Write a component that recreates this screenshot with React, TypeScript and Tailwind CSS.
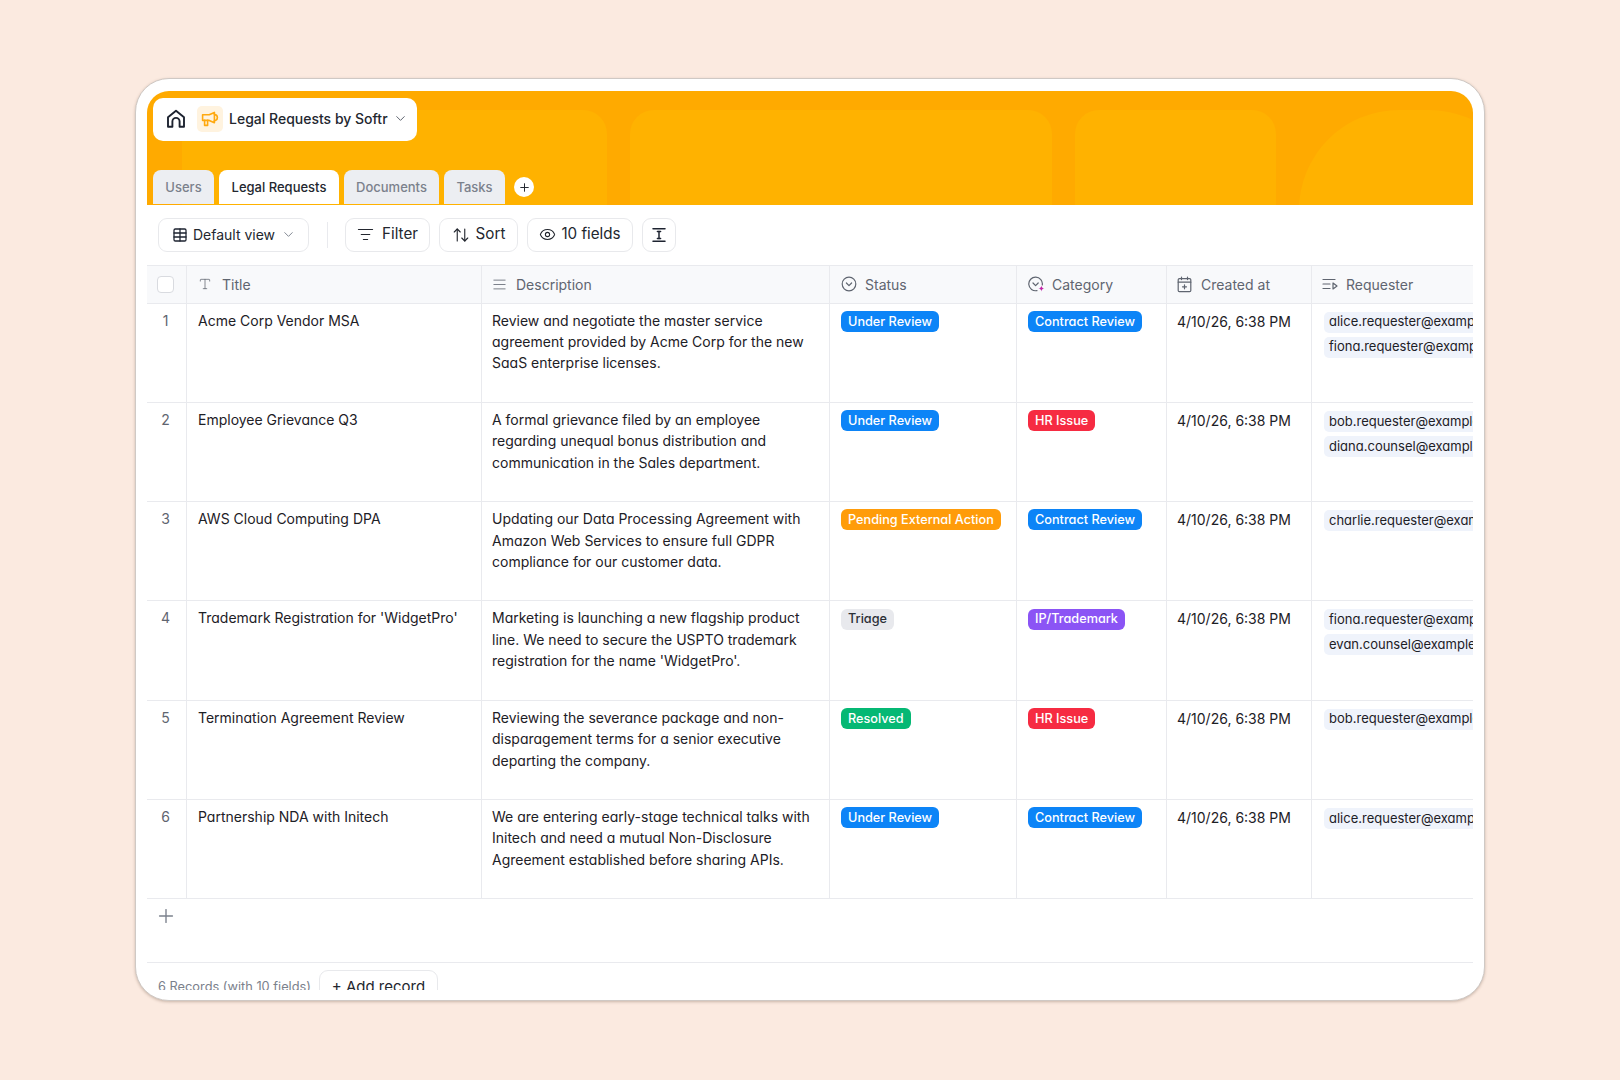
import { ChevronDown, Plus, ListFilter, ArrowUpDown, Eye, Table, AlignJustify, Type } from 'lucide-react';

type Tag = { label: string; cls: string };

const UNDER = { label: 'Under Review', cls: 'bg-[#0c84f7] text-white' };
const PENDING = { label: 'Pending External Action', cls: 'bg-[#ff9c0a] text-white' };
const TRIAGE = { label: 'Triage', cls: 'bg-[#e8e9ed] text-[#2b2f36]' };
const RESOLVED = { label: 'Resolved', cls: 'bg-[#05b874] text-white' };
const CONTRACT = { label: 'Contract Review', cls: 'bg-[#0c84f7] text-white' };
const HR = { label: 'HR Issue', cls: 'bg-[#f62b42] text-white' };
const IP = { label: 'IP/Trademark', cls: 'bg-[#8b54f5] text-white' };

const rows: { title: string; desc: string[]; status: Tag; category: Tag; people: string[] }[] = [
  {
    title: 'Acme Corp Vendor MSA',
    desc: ['Review and negotiate the master service', 'agreement provided by Acme Corp for the new', 'SaaS enterprise licenses.'],
    status: UNDER, category: CONTRACT,
    people: ['alice.requester@example.com', 'fiona.requester@example.com'],
  },
  {
    title: 'Employee Grievance Q3',
    desc: ['A formal grievance filed by an employee', 'regarding unequal bonus distribution and', 'communication in the Sales department.'],
    status: UNDER, category: HR,
    people: ['bob.requester@example.com', 'diana.counsel@example.com'],
  },
  {
    title: 'AWS Cloud Computing DPA',
    desc: ['Updating our Data Processing Agreement with', 'Amazon Web Services to ensure full GDPR', 'compliance for our customer data.'],
    status: PENDING, category: CONTRACT,
    people: ['charlie.requester@example.com'],
  },
  {
    title: "Trademark Registration for 'WidgetPro'",
    desc: ['Marketing is launching a new flagship product', 'line. We need to secure the USPTO trademark', "registration for the name 'WidgetPro'."],
    status: TRIAGE, category: IP,
    people: ['fiona.requester@example.com', 'evan.counsel@example.com'],
  },
  {
    title: 'Termination Agreement Review',
    desc: ['Reviewing the severance package and non-', 'disparagement terms for a senior executive', 'departing the company.'],
    status: RESOLVED, category: HR,
    people: ['bob.requester@example.com'],
  },
  {
    title: 'Partnership NDA with Initech',
    desc: ['We are entering early-stage technical talks with', 'Initech and need a mutual Non-Disclosure', 'Agreement established before sharing APIs.'],
    status: UNDER, category: CONTRACT,
    people: ['alice.requester@example.com'],
  },
];

const COLS = 'grid grid-cols-[40px_295px_348px_187px_150px_145px_161px]';
const CELL = 'border-r border-[#e9eaee] overflow-hidden';

function HomeIcon() {
  return (
    <svg width="22" height="22" viewBox="0 0 22 22" fill="none" stroke="#1d2330" strokeWidth="1.9" strokeLinejoin="round" strokeLinecap="round">
      <path d="M3 9.3 11 2.8l8 6.5v9.4h-4.4v-5.2a3.6 3.6 0 0 0-7.2 0v5.2H3z" />
    </svg>
  );
}

function MegaphoneIcon() {
  return (
    <svg width="18" height="18" viewBox="0 0 18 18" fill="none" stroke="#ffa90f" strokeWidth="1.6" strokeLinejoin="round" strokeLinecap="round">
      <path d="M1.6 4.8h6.6L13.4 2.4v10.4L8.2 10.4H1.6z" />
      <path d="M13.4 4.6a3 3 0 0 1 0 6" />
      <path d="M3.6 10.4v5h3v-5" />
    </svg>
  );
}

function HeightIcon() {
  return (
    <svg width="16" height="16" viewBox="0 0 16 16" fill="none" stroke="#1d2330" strokeWidth="1.5" strokeLinecap="round">
      <path d="M2 1.8h12M2 14.2h12M8 4.2v7.6M6.4 4.6h3.2M6.4 11.4h3.2" />
    </svg>
  );
}

function StatusIcon() {
  return (
    <svg width="16" height="16" viewBox="0 0 16 16" fill="none" stroke="#5f6570" strokeWidth="1.2" strokeLinecap="round" strokeLinejoin="round">
      <circle cx="8" cy="8" r="6.8" />
      <path d="m5.4 7 2.6 2.6L10.6 7" />
    </svg>
  );
}

function CategoryIcon() {
  return (
    <svg width="18" height="17" viewBox="0 0 18 17" fill="none" strokeLinecap="round" strokeLinejoin="round">
      <path d="M14.3 9A6.8 6.8 0 1 0 9 14.6" stroke="#5f6570" strokeWidth="1.2" />
      <path d="m5 7 2.6 2.6L10.2 7" stroke="#5f6570" strokeWidth="1.2" />
      <path d="M13.4 9.4c.3 2 .9 2.6 3 3-2.1.4-2.7 1-3 3-.3-2-.9-2.6-3-3 2.100-.4 2.700-1 3-3z" fill="#c026a8" />
    </svg>
  );
}

function CreatedIcon() {
  return (
    <svg width="15" height="17" viewBox="0 0 15 17" fill="none" stroke="#5f6570" strokeWidth="1.2" strokeLinecap="round" strokeLinejoin="round">
      <rect x="1.2" y="2.600" width="12.600" height="13" rx="1.200" />
      <path d="M1.2 6.200h12.600M4.500 1v2.600M10.500 1v2.600M7.500 8.800v4M5.500 10.800h4" />
    </svg>
  );
}

function RequesterIcon() {
  return (
    <svg width="16" height="14" viewBox="0 0 16 14" fill="none" stroke="#5f6570" strokeWidth="1.2" strokeLinecap="round" strokeLinejoin="round">
      <path d="M1 2.500h12M1 7h7M1 11.500h7M11 6v6l4-3z" />
    </svg>
  );
}

function Pill({ tag }: { tag: Tag }) {
  return (
    <span className={`inline-flex h-[21px] items-center whitespace-nowrap rounded-[6px] px-[7px] text-[12.700px] font-medium [font-feature-settings:'cv11'] ${tag.cls}`}>
      {tag.label}
    </span>
  );
}

function HeadCell({ icon, label, pad }: { icon: React.ReactNode; label: string; pad: string }) {
  return (
    <div className={`${CELL} flex items-center ${pad} text-[14px] text-[#5f6570]`}>
      <span className="flex w-[24px] shrink-0 items-center">{icon}</span>
      {label}
    </div>
  );
}

function ToolButton({ children, cls }: { children: React.ReactNode; cls: string }) {
  return (
    <button className={`flex h-[34px] items-center rounded-[9px] border border-[#e8e9ec] bg-white text-[15.200px] text-[#23272f] ${cls}`}>
      {children}
    </button>
  );
}

function Tab({ label, active, cls }: { label: string; active?: boolean; cls: string }) {
  return (
    <div className={`flex h-[34px] items-center justify-center rounded-t-[8px] pt-[2px] text-[13px] ${active ? 'bg-white font-medium text-[#23272f]' : 'bg-[#eceef2] font-medium text-[#7b818c]'} ${cls}`}>
      {label}
    </div>
  );
}

export default function App() {
  return (
    <div className="flex h-[1080px] w-full items-start justify-center bg-[#fbeae0] pt-[78px] font-['Inter','Noto_Sans',sans-serif]">
      <div className="h-[923px] w-[1350px] rounded-[34px] border border-[#cfc9c5] bg-white px-[11px] pt-[12px] pb-[10px] shadow-[0_1px_3px_rgba(90,60,40,0.3)]">
        <div className="flex h-full flex-col overflow-hidden rounded-t-[22px]">
          {/* banner */}
          <div className="relative h-[114px] shrink-0 overflow-hidden bg-[#ffaa00] px-[6px] pt-[7px]">
            <div className="absolute inset-x-0 top-[19px] bottom-0 flex gap-[23px] pl-[35px]">
              <div className="h-[130%] w-[425px] shrink-0 rounded-[24px] bg-[#ffb200]" />
              <div className="h-[130%] w-[422px] shrink-0 rounded-[24px] bg-[#ffb200]" />
              <div className="h-[130%] w-[201px] shrink-0 rounded-[24px] bg-[#ffb200]" />
              <div className="h-[130%] w-[230px] shrink-0 rounded-t-[100px] bg-[#ffb200]" />
            </div>
            <div className="relative flex h-[43px] w-[264px] items-center rounded-[10px] bg-white pb-[2px] pl-[12px]">
              <HomeIcon />
              <span className="ml-[10px] flex h-[26px] w-[26px] items-center justify-center rounded-[5px] bg-[#fff3df]">
                <MegaphoneIcon />
              </span>
              <span className="ml-[6px] text-[14px] font-medium text-[#23272f]">Legal Requests by Softr</span>
              <ChevronDown className="ml-[5px] h-[15px] w-[15px] text-[#5f6570]" strokeWidth={1.6} />
            </div>
            <div className="relative mt-[29px] flex items-center gap-[5px]">
              <Tab label="Users" cls="w-[61px]" />
              <Tab label="Legal Requests" active cls="w-[120px]" />
              <Tab label="Documents" cls="w-[95px]" />
              <Tab label="Tasks" cls="w-[61px]" />
              <span className="ml-[4px] flex h-[20px] w-[20px] items-center justify-center rounded-full bg-white">
                <Plus className="h-[13px] w-[13px] text-[#23272f]" strokeWidth={1.8} />
              </span>
            </div>
          </div>

          {/* toolbar */}
          <div className="flex h-[61px] shrink-0 items-center border-b border-[#e9eaee] pl-[11px] pb-[7px] pt-[6px]">
            <ToolButton cls="w-[151px] justify-center gap-[5px] pl-[1px] !text-[14px]">
              <Table className="h-[16px] w-[16px] text-[#1d2330]" strokeWidth={1.9} />
              Default view
              <ChevronDown className="ml-[1px] h-[15px] w-[15px] text-[#7b818c]" strokeWidth={1.5} />
            </ToolButton>
            <span className="ml-[18px] mr-[17px] h-[26px] w-px bg-[#e9eaee]" />
            <div className="flex gap-[9px]">
              <ToolButton cls="w-[85px] justify-center gap-[8px]">
                <ListFilter className="h-[17px] w-[17px]" strokeWidth={1.6} />
                Filter
              </ToolButton>
              <ToolButton cls="w-[79px] justify-center gap-[6px]">
                <ArrowUpDown className="h-[18px] w-[18px]" strokeWidth={1.5} />
                Sort
              </ToolButton>
              <ToolButton cls="w-[106px] justify-center gap-[5px]">
                <Eye className="h-[17px] w-[17px]" strokeWidth={1.5} />
                10 fields
              </ToolButton>
              <ToolButton cls="w-[34px] justify-center">
                <HeightIcon />
              </ToolButton>
            </div>
          </div>

          {/* table */}
          <div className="shrink-0">
            <div className={`${COLS} h-[37.500px] border-b border-[#e9eaee] bg-[#f8f9fb]`}>
              <div className={`${CELL} flex items-center justify-center pr-[2px]`}>
                <span className="h-[17px] w-[17px] rounded-[4px] border border-[#d9dbe0] bg-white" />
              </div>
              <HeadCell icon={<Type className="h-[14px] w-[14px] text-[#5f6570]" strokeWidth={1.3} />} label="Title" pad="pl-[11px]" />
              <HeadCell icon={<AlignJustify className="h-[15px] w-[15px] text-[#5f6570]" strokeWidth={1.3} />} label="Description" pad="pl-[10px]" />
              <HeadCell icon={<StatusIcon />} label="Status" pad="pl-[11px]" />
              <HeadCell icon={<CategoryIcon />} label="Category" pad="pl-[11px]" />
              <HeadCell icon={<CreatedIcon />} label="Created at" pad="pl-[10px]" />
              <HeadCell icon={<RequesterIcon />} label="Requester" pad="pl-[10px] border-r-0" />
            </div>
            {rows.map((r, i) => (
              <div key={r.title} className={`${COLS} h-[99.300px] border-b border-[#e9eaee] text-[14px] font-[420] leading-[21.400px] text-[#1d2026] [font-feature-settings:'cv11']`}>
                <div className={`${CELL} pr-[2px] pt-[6px] text-center text-[#5f6570]`}>{i + 1}</div>
                <div className={`${CELL} whitespace-nowrap pl-[11px] pt-[6px]`}>{r.title}</div>
                <div className={`${CELL} whitespace-nowrap pl-[10px] pt-[6px]`}>
                  {r.desc.map((l) => <div key={l}>{l}</div>)}
                </div>
                <div className={`${CELL} pl-[11px] pt-[6px]`}><Pill tag={r.status} /></div>
                <div className={`${CELL} pl-[11px] pt-[6px]`}><Pill tag={r.category} /></div>
                <div className={`${CELL} whitespace-nowrap pl-[10px] pt-[7px]`}>4/10/26, 6:38 PM</div>
                <div className="flex flex-col gap-[4px] overflow-hidden pl-[12px] pt-[8px]">
                  {r.people.map((p) => (
                    <span key={p} className="flex h-[21px] w-max items-center rounded-[5px] bg-[#eff3fb] px-[5px] text-[13px]">{p}</span>
                  ))}
                </div>
              </div>
            ))}
          </div>

          {/* add row + footer */}
          <div className="flex h-[64px] shrink-0 items-start border-b border-[#e9eaee] pl-[8px] pt-[6px]">
            <Plus className="h-[22px] w-[22px] text-[#7b818c]" strokeWidth={1.5} />
          </div>
          <div className="flex items-start gap-[8px] pl-[11px] pt-[7px]">
            <span className="mt-[7px] whitespace-nowrap text-[12.800px] leading-[20px] text-[#7b818c]">6 Records (with 10 fields)</span>
            <button className="h-[34px] w-[119px] rounded-[9px] border border-[#e8e9ec] bg-white text-[15px] text-[#23272f]">+ Add record</button>
          </div>
        </div>
      </div>
    </div>
  );
}
